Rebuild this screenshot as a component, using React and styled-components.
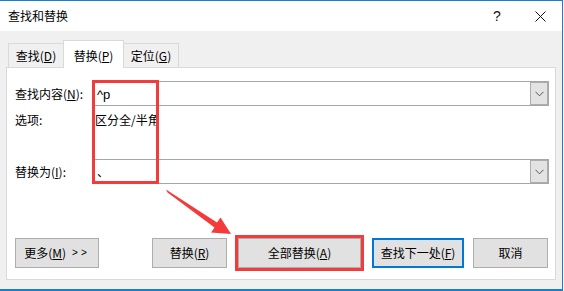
import React from "react";
import styled, { createGlobalStyle } from "styled-components";

const GlobalStyle = createGlobalStyle`
  html, body { margin: 0; padding: 0; background: #fff; }
  body {
    font-family: "Noto Sans CJK SC", "Noto Sans", sans-serif;
    font-size: 12px;
    color: #000;
  }
`;

const Dialog = styled.div`
  position: relative;
  width: 562px;
  height: 288px;
  border-top: 1px solid #1a7fd4;
  border-right: 1px solid #1a7fd4;
  border-bottom: 2px solid #1a7fd4;
  background: #f0f0f0;
  display: flex;
  flex-direction: column;
`;

const TitleBar = styled.div`
  height: 30px;
  background: #fff;
  display: flex;
  align-items: center;
  padding-left: 8px;
  flex: none;
`;

const Title = styled.div`
  flex: 1;
  font-size: 12px;
  line-height: 16px;
  margin-top: 0px;
`;

const TitleButton = styled.div`
  width: ${(p) => p.$w}px;
  height: 30px;
  display: flex;
  align-items: center;
  justify-content: center;
  font-family: "Liberation Sans", "DejaVu Sans", sans-serif;
  font-size: 14px;
  color: #111;
`;

const Body = styled.div`
  flex: 1;
  padding: 9px 6px 9px 6px;
  display: flex;
  flex-direction: column;
`;

const TabRow = styled.div`
  display: flex;
  align-items: flex-end;
  height: 27px;
  margin-left: 2px;
  position: relative;
  z-index: 1;
`;

const Tab = styled.div`
  box-sizing: border-box;
  width: ${(p) => p.$w}px;
  height: ${(p) => (p.$active ? 28 : 24)}px;
  margin-bottom: ${(p) => (p.$active ? -1 : 0)}px;
  margin-left: ${(p) => (p.$first ? 0 : -1)}px;
  padding-top: ${(p) => (p.$active ? 2 : 0)}px;
  border: 1px solid #d9d9d9;
  border-bottom: none;
  background: ${(p) => (p.$active ? "#fff" : "#f0f0f0")};
  position: relative;
  z-index: ${(p) => (p.$active ? 2 : 1)};
  display: flex;
  align-items: center;
  justify-content: center;
  line-height: 16px;
`;

const U = styled.span`
  text-decoration: underline;
  text-underline-offset: 1px;
`;

const Panel = styled.div`
  box-sizing: border-box;
  height: 213px;
  border: 1px solid #d9d9d9;
  background: #fff;
  padding: 13px 6px 11px 8px;
  display: flex;
  flex-direction: column;
`;

const FieldRow = styled.div`
  display: flex;
  align-items: center;
  height: 25px;
  margin-top: ${(p) => p.$mt || 0}px;
  flex: none;
`;

const Label = styled.div`
  width: 78px;
  flex: none;
  line-height: 16px;
`;

const Combo = styled.div`
  flex: 1;
  box-sizing: border-box;
  height: 25px;
  border: 1px solid #a6a6a6;
  background: #fff;
  display: flex;
`;

const ComboText = styled.div`
  flex: 1;
  padding-left: 3px;
  line-height: 23px;
  font-size: 12px;
`;

const CaretText = styled.span`
  font-family: "Liberation Sans", "DejaVu Sans", sans-serif;
  font-size: 13px;
`;

const DropButton = styled.div`
  box-sizing: border-box;
  width: 18px;
  height: 23px;
  border: 1px solid #adadad;
  background: #e3e3e3;
  display: flex;
  align-items: center;
  justify-content: center;
`;

const OptionsRow = styled.div`
  display: flex;
  align-items: center;
  height: 16px;
  margin-top: 6px;
  flex: none;
`;

const OptionsText = styled.div`
  width: 61px;
  margin-left: 2px;
  overflow: hidden;
  white-space: nowrap;
  line-height: 16px;
`;

const ButtonRow = styled.div`
  display: flex;
  align-items: center;
  height: 30px;
  margin-top: 54px;
  padding-right: 1px;
  flex: none;
`;

const Spacer = styled.div`
  flex: 1;
`;

const Button = styled.div`
  box-sizing: border-box;
  width: ${(p) => p.$w}px;
  height: 30px;
  margin-left: ${(p) => p.$ml || 0}px;
  border: ${(p) => (p.$primary ? "2px solid #0078d7" : "1px solid #adadad")};
  background: #e1e1e1;
  outline: ${(p) => (p.$highlight ? "3px solid #f43b3b" : "none")};
  display: flex;
  align-items: center;
  justify-content: center;
  line-height: 16px;
  flex: none;
`;

const Chevrons = styled.span`
  font-family: "Liberation Sans", "DejaVu Sans", sans-serif;
  font-size: 10px;
  letter-spacing: 3px;
  margin-left: 6px;
`;

const Annotation = styled.div`
  position: absolute;
  left: 92px;
  top: 79px;
  width: 67px;
  height: 104px;
  box-sizing: border-box;
  border: 3px solid #f43b3b;
  pointer-events: none;
`;

const ArrowLayer = styled.svg`
  position: absolute;
  left: 0;
  top: -1px;
  width: 564px;
  height: 291px;
  pointer-events: none;
`;

const Chevron = () => (
  <svg width="9" height="6" viewBox="0 0 9 6">
    <polyline points="0.5,0.8 4.5,4.8 8.5,0.8" fill="none" stroke="#555" strokeWidth="1" />
  </svg>
);

const CloseIcon = () => (
  <svg width="11" height="11" viewBox="0 0 11 11">
    <line x1="0.5" y1="0.5" x2="10.5" y2="10.5" stroke="#111" strokeWidth="1" />
    <line x1="10.5" y1="0.5" x2="0.5" y2="10.5" stroke="#111" strokeWidth="1" />
  </svg>
);

export default function App() {
  return (
    <>
      <GlobalStyle />
      <Dialog>
        <TitleBar>
          <Title>查找和替换</Title>
          <TitleButton $w={42}>?</TitleButton>
          <TitleButton $w={44}>
            <CloseIcon />
          </TitleButton>
        </TitleBar>
        <Body>
          <TabRow>
            <Tab $w={56} $first>
              查找(<U>D</U>)
            </Tab>
            <Tab $w={61} $active>
              替换(<U>P</U>)
            </Tab>
            <Tab $w={56}>
              定位(<U>G</U>)
            </Tab>
          </TabRow>
          <Panel>
            <FieldRow>
              <Label>
                查找内容(<U>N</U>):
              </Label>
              <Combo>
                <ComboText>
                  <CaretText>^p</CaretText>
                </ComboText>
                <DropButton>
                  <Chevron />
                </DropButton>
              </Combo>
            </FieldRow>
            <OptionsRow>
              <Label>选项:</Label>
              <OptionsText>区分全/半角</OptionsText>
            </OptionsRow>
            <FieldRow $mt={31}>
              <Label>
                替换为(<U>I</U>):
              </Label>
              <Combo>
                <ComboText>、</ComboText>
                <DropButton>
                  <Chevron />
                </DropButton>
              </Combo>
            </FieldRow>
            <ButtonRow>
              <Button $w={84}>
                更多(<U>M</U>)<Chevrons>&gt;&gt;</Chevrons>
              </Button>
              <Spacer />
              <Button $w={75}>
                替换(<U>R</U>)
              </Button>
              <Button $w={123} $ml={11} $highlight>
                全部替换(<U>A</U>)
              </Button>
              <Button $w={92} $ml={11} $primary>
                查找下一处(<U>F</U>)
              </Button>
              <Button $w={75} $ml={9}>
                取消
              </Button>
            </ButtonRow>
          </Panel>
        </Body>
        <Annotation />
        <ArrowLayer viewBox="0 0 564 291">
          <polygon
            points="166,189.5 217,222.5 220.5,217.5 231,234 211,232.5 214.5,227.5 167.5,192.5"
            fill="#f43b3b"
          />
        </ArrowLayer>
      </Dialog>
    </>
  );
}
